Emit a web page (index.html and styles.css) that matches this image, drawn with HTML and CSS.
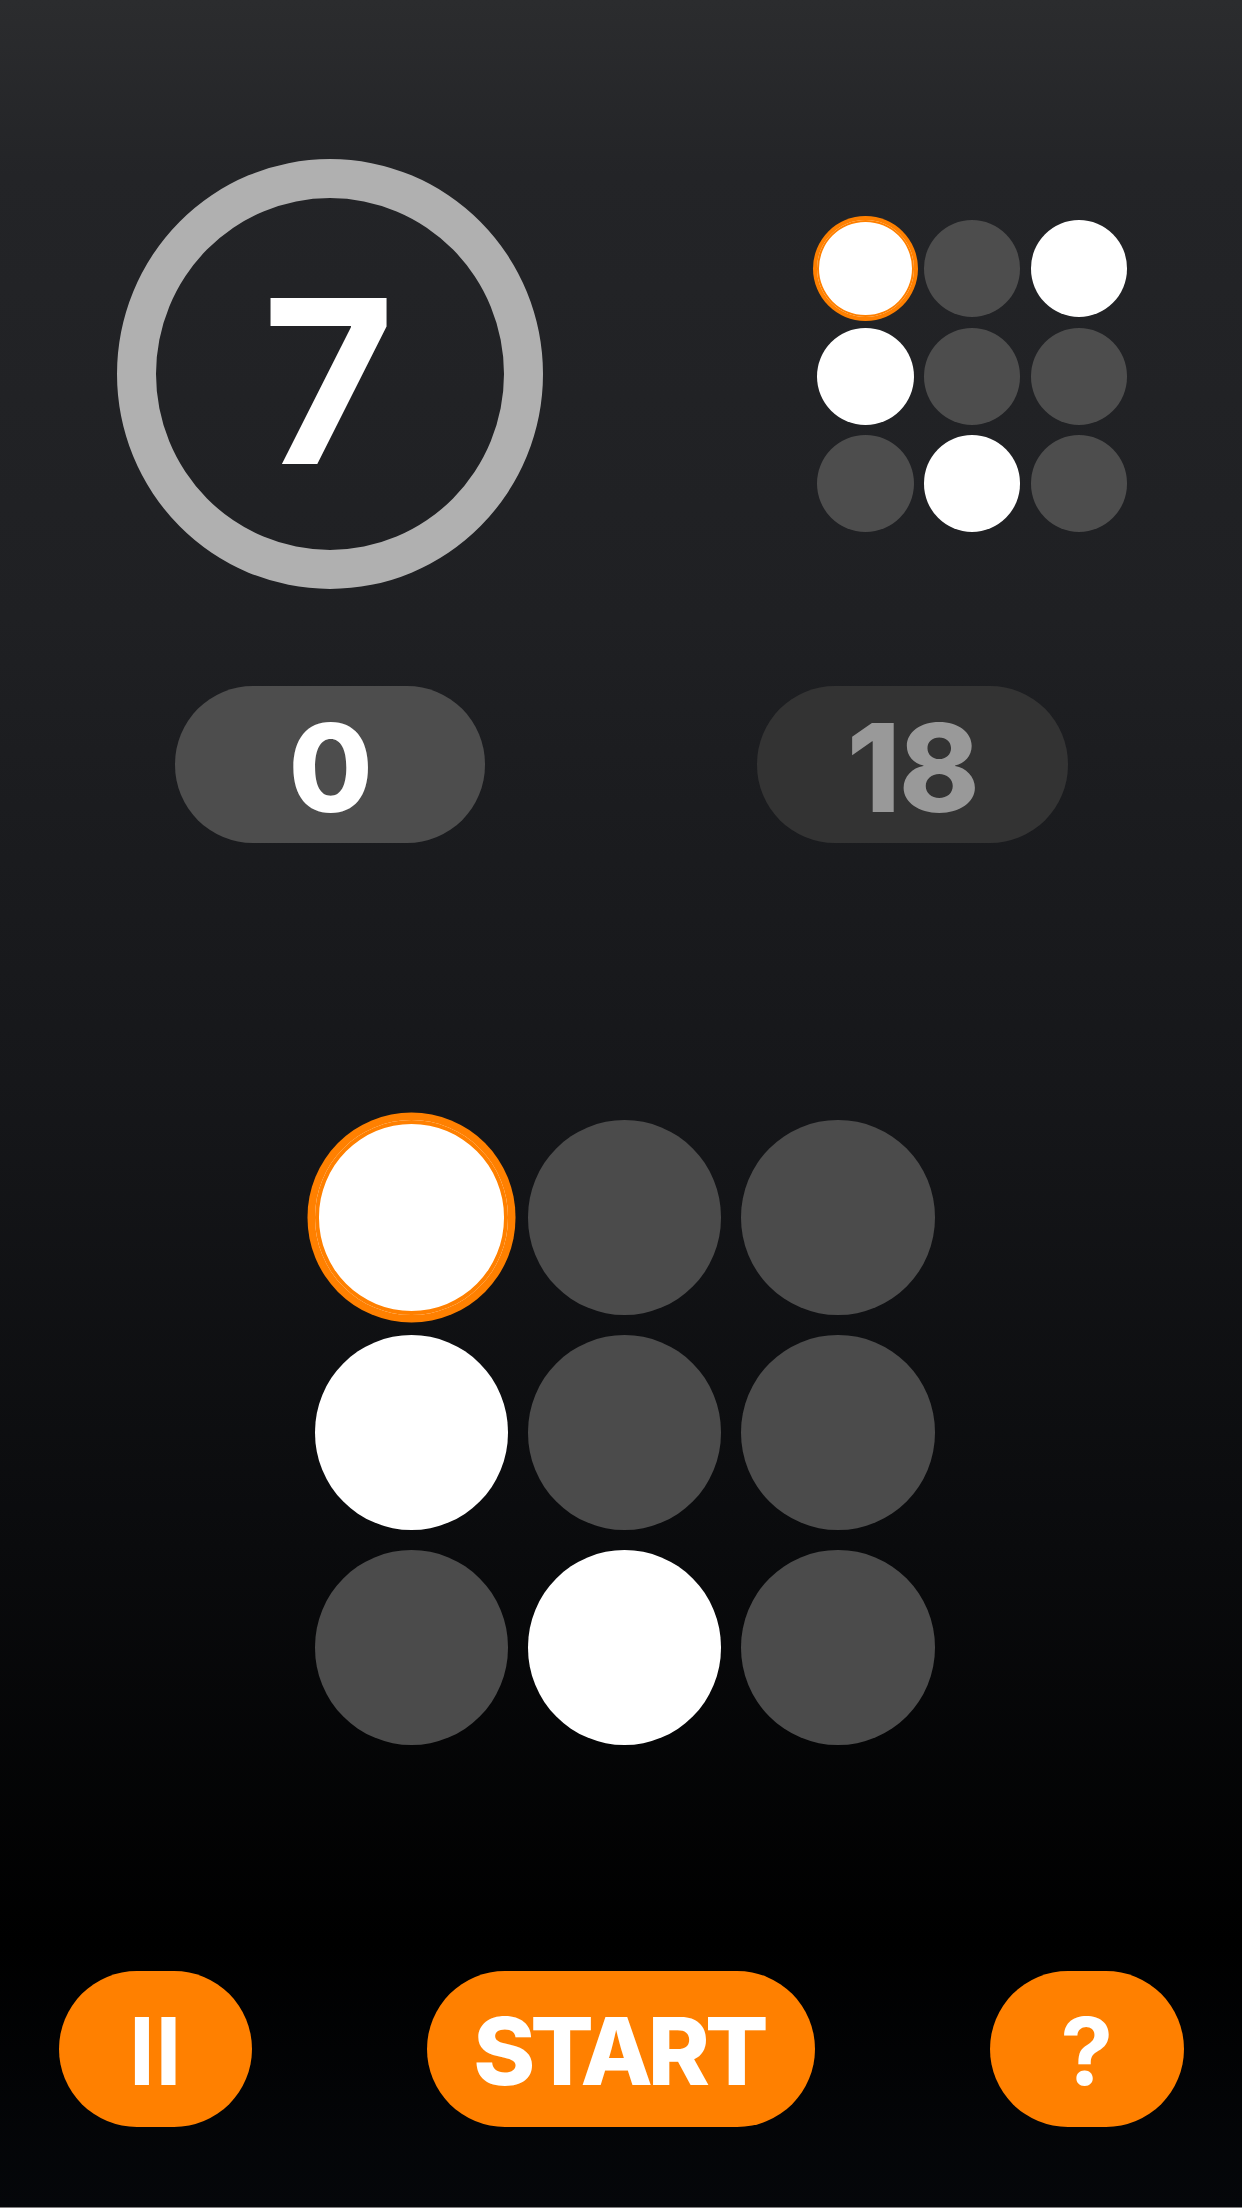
FILE: index.html
```html
<!DOCTYPE html>
<html lang="en">
<head>
  <meta charset="UTF-8">
  <title>Memory Dots</title>
  <link rel="stylesheet" href="styles.css">
</head>
<body>

<div class="top">
  <div class="timer">7</div>
  <div class="preview">
    <div class="dot on active"></div>
    <div class="dot"></div>
    <div class="dot on"></div>
    <div class="dot on"></div>
    <div class="dot"></div>
    <div class="dot"></div>
    <div class="dot"></div>
    <div class="dot on"></div>
    <div class="dot"></div>
  </div>
</div>

<div class="scores">
  <div class="score">0</div>
  <div class="score best">18</div>
</div>

<div class="board">
  <div class="cell on active"></div>
  <div class="cell"></div>
  <div class="cell"></div>
  <div class="cell on"></div>
  <div class="cell"></div>
  <div class="cell"></div>
  <div class="cell"></div>
  <div class="cell on"></div>
  <div class="cell"></div>
</div>

<div class="controls">
  <button class="btn small">II</button>
  <button class="btn wide">START</button>
  <button class="btn small">?</button>
</div>

</body>
</html>
```

FILE: styles.css
```css
html, body {
  margin: 0;
  height: 2208px;
}
body {
  background: linear-gradient(180deg, #2b2c2e 0, #232427 8%, #1f2023 28%, #1c1d20 34%, #16171a 49%, #0a0b0d 70%, #000 88%, #05070a calc(100% - 1px), #808080 calc(100% - 1px));
  color: #fff;
  font-family: Inter, "Noto Sans", sans-serif;
  overflow: hidden;
}
.top {
  display: flex;
  align-items: center;
  padding: 159px 0 0 117px;
}
.timer {
  box-sizing: border-box;
  width: 426px;
  height: 430px;
  padding: 14px 3px 0 0;
  border: 39px solid #b0b0b0;
  border-radius: 50%;
  display: flex;
  align-items: center;
  justify-content: center;
  font-size: 228px;
  font-weight: 700;
  line-height: 1;
}
.preview {
  display: grid;
  grid-template-columns: repeat(3, 96.5px);
  grid-auto-rows: 97px;
  column-gap: 10.2px;
  row-gap: 10.5px;
  margin: 4px 0 0 274.3px;
}
.dot {
  background: #4d4d4d;
  border-radius: 50%;
}
.dot.on {
  background: #fff;
}
.dot.active {
  box-shadow: 0 0 0 4px #ff8000, inset 0 0 0 2px #ff8000;
}
.scores {
  display: flex;
  gap: 272px;
  margin-top: 97px;
  padding-left: 174.5px;
}
.score {
  box-sizing: border-box;
  width: 310.5px;
  height: 157px;
  padding-top: 5px;
  background: #4d4d4d;
  border-radius: 78px;
  display: flex;
  align-items: center;
  justify-content: center;
  font-size: 122px;
  font-weight: 800;
  letter-spacing: -2px;
}
.score.best {
  background: #333;
  color: #999;
}
.board {
  display: grid;
  grid-template-columns: repeat(3, 193.5px);
  grid-auto-rows: 194.5px;
  column-gap: 19.8px;
  row-gap: 20.5px;
  margin-top: 277px;
  padding-left: 314.7px;
}
.cell {
  background: #4b4b4b;
  border-radius: 50%;
}
.cell.on {
  background: #fff;
}
.cell.active {
  box-shadow: 0 0 0 7.5px #ff8000, inset 0 0 0 4px #ff8000;
}
.controls {
  display: flex;
  justify-content: space-between;
  margin-top: 226px;
  padding: 0 58.5px;
}
.btn {
  height: 156px;
  border: none;
  border-radius: 78px;
  background: #ff8000;
  color: #fff;
  font-family: inherit;
  font-size: 94px;
  font-weight: 700;
  line-height: 1;
  padding: 5px 0 0;
}
.small {
  width: 193.5px;
}
.wide {
  width: 387.5px;
  padding-right: 5px;
  font-weight: 800;
  letter-spacing: -5px;
}
```
